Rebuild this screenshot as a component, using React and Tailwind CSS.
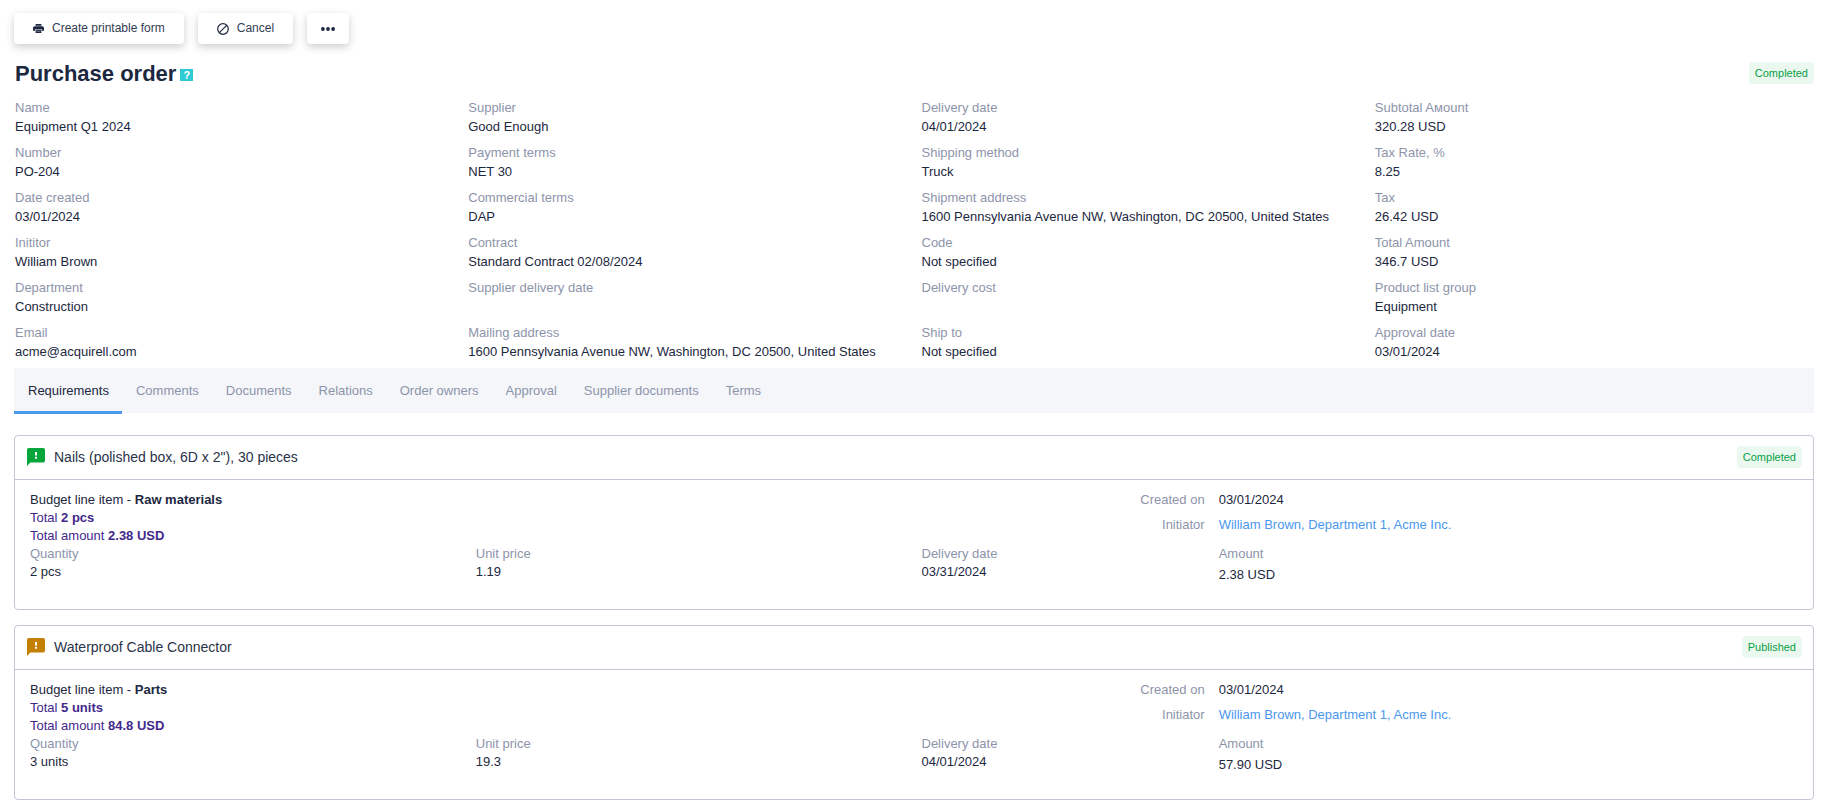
import React, { useState } from "react";

const columns = [
  [
    ["Name", "Equipment Q1 2024"],
    ["Number", "PO-204"],
    ["Date created", "03/01/2024"],
    ["Inititor", "William Brown"],
    ["Department", "Construction"],
    ["Email", "acme@acquirell.com"],
  ],
  [
    ["Supplier", "Good Enough"],
    ["Payment terms", "NET 30"],
    ["Commercial terms", "DAP"],
    ["Contract", "Standard Contract 02/08/2024"],
    ["Supplier delivery date", ""],
    ["Mailing address", "1600 Pennsylvania Avenue NW, Washington, DC 20500, United States"],
  ],
  [
    ["Delivery date", "04/01/2024"],
    ["Shipping method", "Truck"],
    ["Shipment address", "1600 Pennsylvania Avenue NW, Washington, DC 20500, United States"],
    ["Code", "Not specified"],
    ["Delivery cost", ""],
    ["Ship to", "Not specified"],
  ],
  [
    ["Subtotal Aмount", "320.28 USD"],
    ["Tax Rate, %", "8.25"],
    ["Tax", "26.42 USD"],
    ["Total Amount", "346.7 USD"],
    ["Product list group", "Equipment"],
    ["Approval date", "03/01/2024"],
  ],
];

const tabs = [
  "Requirements",
  "Comments",
  "Documents",
  "Relations",
  "Order owners",
  "Approval",
  "Supplier documents",
  "Terms",
];

const items = [
  {
    title: 'Nails (polished box, 6D x 2"), 30 pieces',
    status: "Completed",
    iconClass: "text-[#07a53b]",
    budget: "Raw materials",
    total: "2 pcs",
    totalAmount: "2.38 USD",
    quantity: "2 pcs",
    price: "1.19",
    delivery: "03/31/2024",
    amount: "2.38 USD",
  },
  {
    title: "Waterproof Cable Connector",
    status: "Published",
    iconClass: "text-[#c48004]",
    budget: "Parts",
    total: "5 units",
    totalAmount: "84.8 USD",
    quantity: "3 units",
    price: "19.3",
    delivery: "04/01/2024",
    amount: "57.90 USD",
  },
];

function PrinterIcon() {
  return (
    <svg viewBox="0 0 11 9" className="mt-0.5 h-[9px] w-[11px] text-[#1c2740]" fill="currentColor" aria-hidden="true">
      <path d="M2.600 0h5.800v1.800H2.600zM1.800 2.200h7.400A1.800 1.800 0 0 1 11 4v2.800H9V5.200H2v1.600H0V4a1.800 1.800 0 0 1 1.800-1.800z" />
      <path d="M2.600 5.700h5.800V9H2.600z" />
      <path d="M3.400 7.300h4.200" stroke="#fff" strokeWidth=".4" />
    </svg>
  );
}

function BanIcon() {
  return (
    <svg viewBox="0 0 12 12" className="mt-0.5 size-3 text-[#1c2740]" fill="none" stroke="currentColor" strokeWidth="1.2" aria-hidden="true">
      <circle cx="6" cy="6" r="5.300" />
      <path d="M2.300 9.700l7.400-7.400" />
    </svg>
  );
}

function DotsIcon() {
  return (
    <svg viewBox="0 0 14 4" className="mt-0.5 h-1 w-[14px] text-[#1c2740]" fill="currentColor" aria-hidden="true">
      <circle cx="1.900" cy="2" r="1.900" />
      <circle cx="7" cy="2" r="1.900" />
      <circle cx="12.100" cy="2" r="1.900" />
    </svg>
  );
}

function FeedbackIcon({ className }) {
  return (
    <svg viewBox="0 0 18 18" className={"size-[18px] shrink-0 " + className} aria-hidden="true">
      <path
        fill="currentColor"
        d="M1.800 0h14.400A1.800 1.800 0 0 1 18 1.800v11a1.800 1.800 0 0 1-1.800 1.800H3.400L0 18V1.800A1.800 1.800 0 0 1 1.800 0z"
      />
      <path fill="#fff" d="M8 4h2v3.600H8zM8 8.800h2v1.900H8z" />
    </svg>
  );
}

function Badge({ children }) {
  return (
    <span className="rounded-[4px] bg-[#ebf8f0] px-1.5 text-[11px] leading-[22px] text-[#0a9f45]">
      {children}
    </span>
  );
}

const actionClass =
  "flex h-[31px] cursor-pointer items-center rounded-[4px] bg-white pb-0.5 text-xs text-[#323c54] shadow-[0_3px_8px_rgba(0,0,0,0.2)]";

function Field({ label, value, valueClass = "" }) {
  return (
    <div>
      <dt className="text-[#8d94aa]">{label}</dt>
      <dd className={valueClass}>{value}</dd>
    </div>
  );
}

function ItemCard({ item }) {
  return (
    <article className="rounded-[4px] border border-[#c4c6d5]">
      <header className="flex h-11 items-center border-b border-[#c4c6d5] pr-[11px] pb-px pl-3">
        <FeedbackIcon className={item.iconClass} />
        <h2 className="ml-[9px] flex-1 text-sm text-[#2a3349]">{item.title}</h2>
        <Badge>{item.status}</Badge>
      </header>
      <div className="pt-[11px] pb-[25px] pl-[15px] leading-[18px]">
        <div className="grid grid-cols-12">
          <div className="col-span-6">
            <p>
              Budget line item - <b>{item.budget}</b>
            </p>
            <p className="text-[#43288c]">
              Total <b>{item.total}</b>
            </p>
            <p className="text-[#43288c]">
              Total amount <b>{item.totalAmount}</b>
            </p>
          </div>
          <dl className="col-span-6 grid grid-cols-3 content-start gap-y-[7px]">
            <dt className="pr-[14px] text-right text-[#8d94aa]">Created on</dt>
            <dd className="col-span-2">03/01/2024</dd>
            <dt className="pr-[14px] text-right text-[#8d94aa]">Initiator</dt>
            <dd className="col-span-2">
              <a href="#initiator" className="text-[#4a97ee]">
                William Brown, Department 1, Acme Inc.
              </a>
            </dd>
          </dl>
        </div>
        <dl className="grid grid-cols-12">
          <div className="col-span-3">
            <Field label="Quantity" value={item.quantity} />
          </div>
          <div className="col-span-3">
            <Field label="Unit price" value={item.price} />
          </div>
          <div className="col-span-2">
            <Field label="Delivery date" value={item.delivery} />
          </div>
          <div className="col-span-4">
            <Field label="Amount" value={item.amount} valueClass="mt-[3px]" />
          </div>
        </dl>
      </div>
    </article>
  );
}

export default function App() {
  const [active, setActive] = useState("Requirements");
  return (
    <div className="min-h-screen bg-white font-['Liberation_Sans',Arial,sans-serif] text-[13px] text-[#1c2740]">
      <div className="flex gap-[14px] px-[14px] pt-[13px] pb-[17px]">
        <button type="button" className={actionClass + " gap-2 px-[19px]"}>
          <PrinterIcon />
          Create printable form
        </button>
        <button type="button" className={actionClass + " gap-2 px-[19px]"}>
          <BanIcon />
          Cancel
        </button>
        <button type="button" aria-label="More actions" className={actionClass + " px-[14px]"}>
          <DotsIcon />
        </button>
      </div>

      <div className="flex items-start pr-[14px] pl-[15px]">
        <h1 className="text-[22px] leading-[26px] font-bold">Purchase order</h1>
        <a
          href="#help"
          aria-label="Help"
          className="mt-2 ml-1 flex h-3 w-[13px] items-center justify-center bg-[#2fcad3] text-[11px] leading-3 font-bold text-white"
        >
          ?
        </a>
        <div className="ml-auto flex pt-px">
          <Badge>Completed</Badge>
        </div>
      </div>

      <div className="grid grid-cols-4 pt-[11px] pl-[15px]">
        {columns.map((fields, i) => (
          <dl key={i}>
            {fields.map(([label, value]) => (
              <div key={label} className="h-[45px] leading-[19px]">
                <Field label={label} value={value} />
              </div>
            ))}
          </dl>
        ))}
      </div>

      <main className="px-[14px] pb-2">
        <nav role="tablist" className="flex h-[45px] bg-[#f4f6fa]">
          {tabs.map((tab) => (
            <button
              key={tab}
              type="button"
              role="tab"
              aria-selected={tab === active}
              onClick={() => setActive(tab)}
              className={
                tab === active
                  ? "h-[46px] cursor-pointer border-b-3 border-[#4a9aec] pt-0.5 pr-[13px] pl-[14px] text-[#1c2740]"
                  : "h-[46px] cursor-pointer border-b-3 border-transparent pt-0.5 pr-[13px] pl-[14px] text-[#8d94aa]"
              }
            >
              {tab}
            </button>
          ))}
        </nav>
        <div className="mt-[22px] flex flex-col gap-[15px]">
          {items.map((item) => (
            <ItemCard key={item.title} item={item} />
          ))}
        </div>
      </main>
    </div>
  );
}
